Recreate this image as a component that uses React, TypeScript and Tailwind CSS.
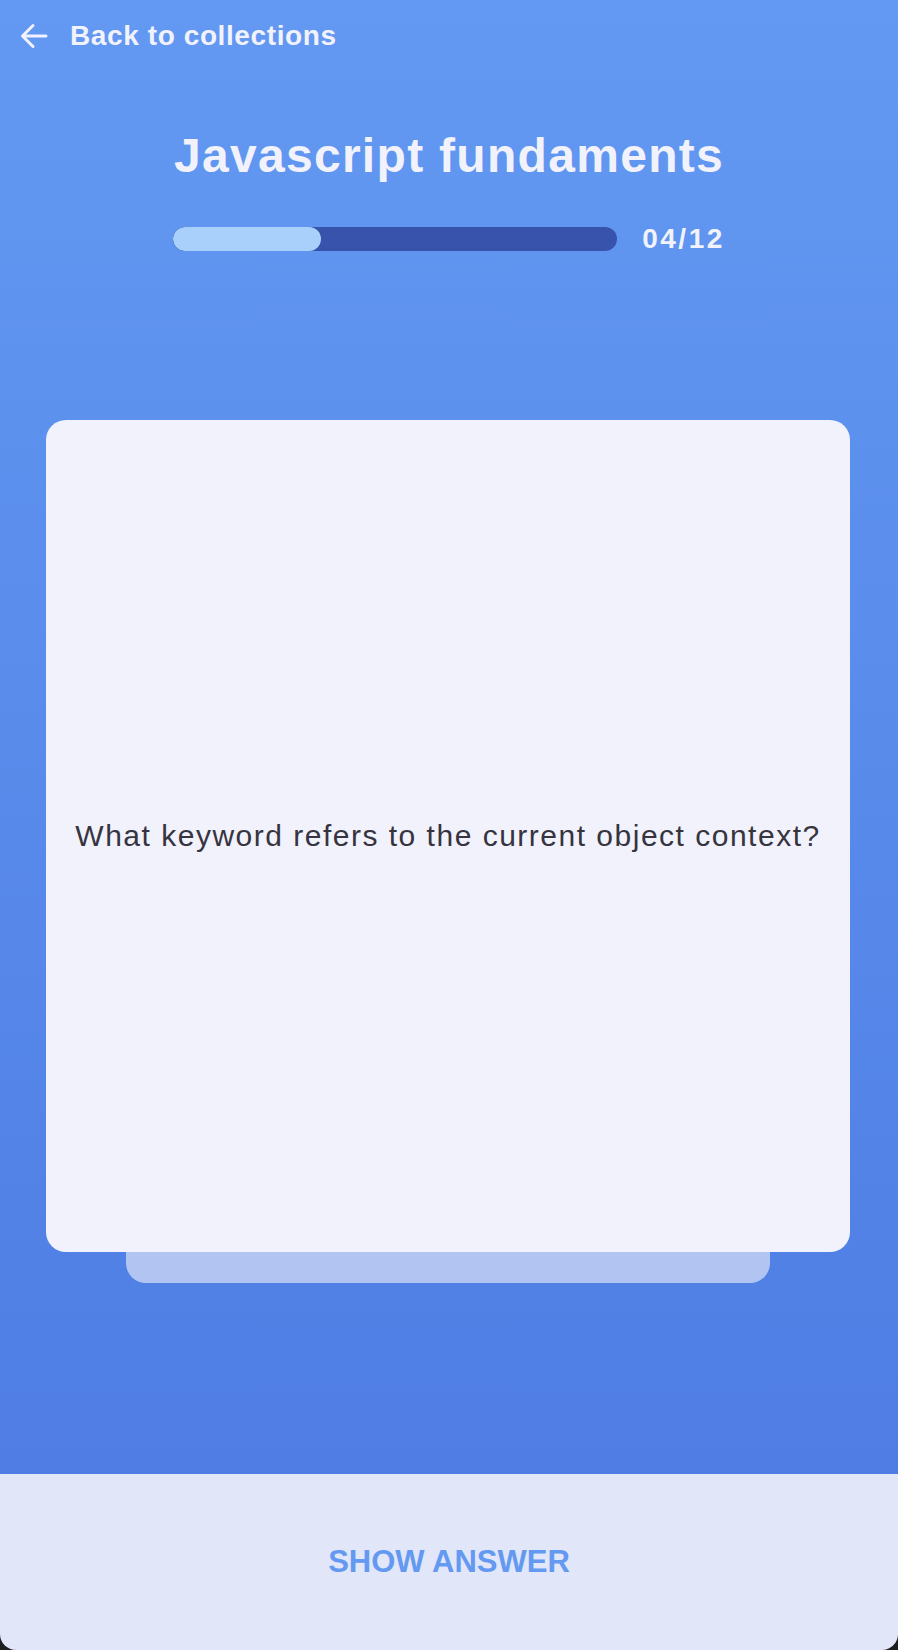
import React from 'react';

const font = { fontFamily: '"Liberation Sans", Arial, sans-serif' };

const BackArrow: React.FC = () => (
  <svg width="28" height="26" viewBox="0 0 28 26" fill="none">
    <path
      d="M26 13H3M13 2.5L2.5 13L13 23.5"
      stroke="#F1F2FB"
      strokeWidth="3"
      strokeLinecap="round"
      strokeLinejoin="round"
    />
  </svg>
);

const ProgressBar: React.FC<{ current: number; total: number }> = ({ current, total }) => {
  const pct = (current / total) * 100;
  return (
    <div className="flex items-center justify-center gap-[25px]">
      <div className="w-[444px] h-6 rounded-full bg-[#3853AB] overflow-hidden">
        <div className="h-full rounded-full bg-[#A9D0FA]" style={{ width: `${pct}%` }} />
      </div>
      <span className="text-[28px] leading-6 font-bold tracking-[2.5px] text-[#F1F2FB]">
        {String(current).padStart(2, '0')}/{total}
      </span>
    </div>
  );
};

export default function App() {
  return (
    <div className="w-[898px] h-[1650px] bg-[#1E1E20]" style={font}>
      <div className="h-[1474px] flex flex-col bg-gradient-to-b from-[#6399F2] to-[#4F7DE4]">
        <header className="pt-5 pl-5 flex items-center gap-[22px]">
          <BackArrow />
          <span className="text-[28px] leading-8 font-bold tracking-[0.6px] text-[#F1F2FB]">Back to collections</span>
        </header>

        <h1 className="mt-[76px] text-center text-[48px] leading-[56px] font-bold tracking-[1.3px] text-[#F1F2FB]">
          Javascript fundaments
        </h1>

        <div className="mt-[43px]">
          <ProgressBar current={4} total={12} />
        </div>

        <div className="mt-[169px] ml-[46px] w-[804px] h-[832px] rounded-[20px] bg-[#F1F2FB] flex items-center justify-center px-4">
          <p className="text-[30px] leading-9 text-center tracking-[1.5px] text-[#36343F]">
            What keyword refers to the current object context?
          </p>
        </div>
        <div className="ml-[126px] w-[644px] h-[31px] rounded-b-[20px] bg-[#B2C5F2]" />
      </div>

      <div className="h-[176px] rounded-b-[16px] bg-[#E1E6F8] flex items-center justify-center">
        <button className="text-[31px] font-bold text-[#6499F2]">SHOW ANSWER</button>
      </div>
    </div>
  );
}
